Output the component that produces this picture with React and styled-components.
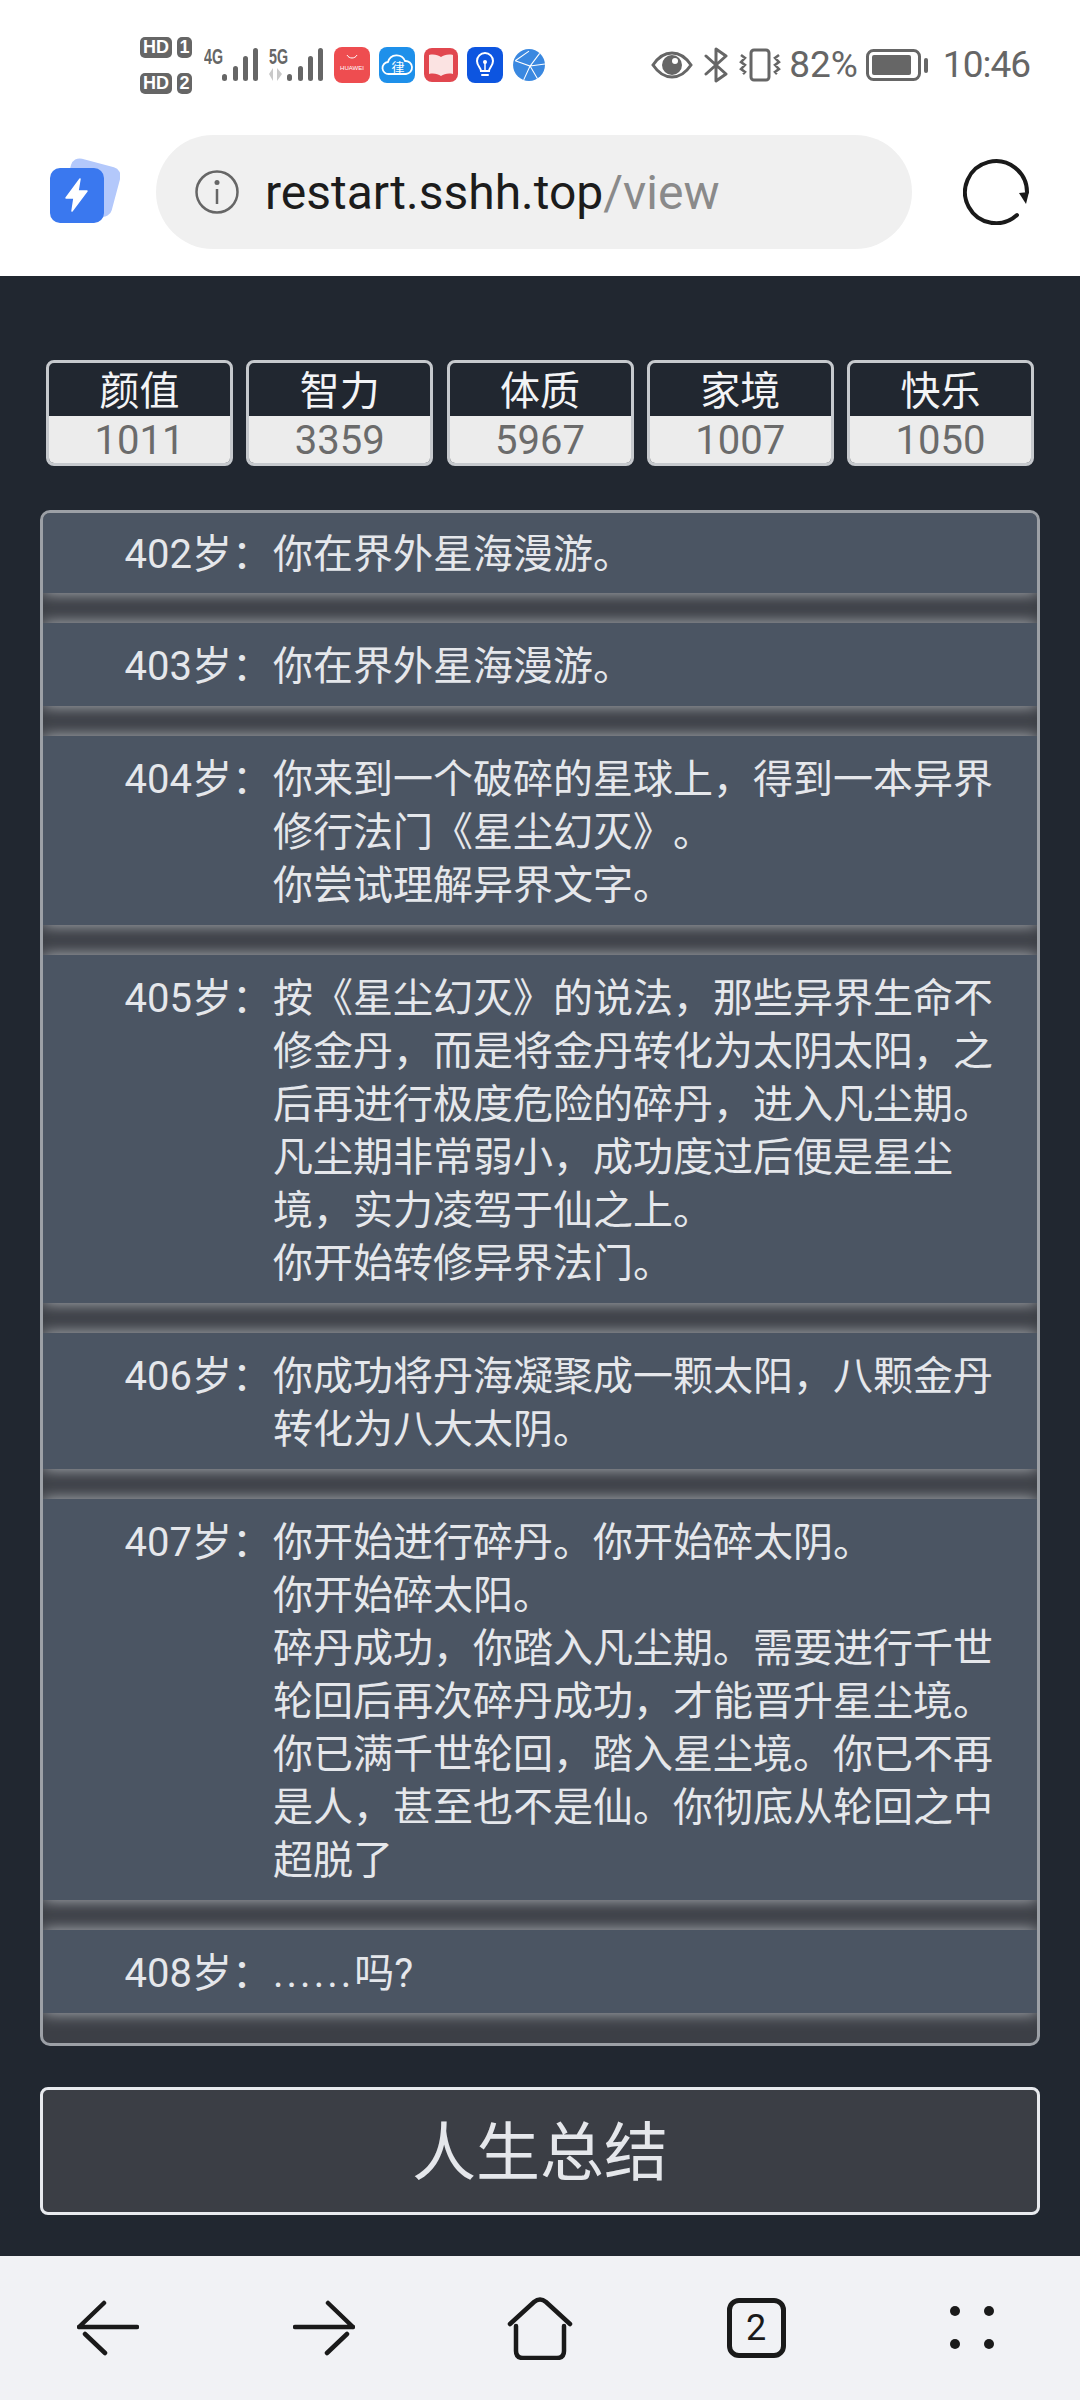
import React from 'react'
import styled, { createGlobalStyle } from 'styled-components'

const stats = [
  { label: '颜值', value: 1011 },
  { label: '智力', value: 3359 },
  { label: '体质', value: 5967 },
  { label: '家境', value: 1007 },
  { label: '快乐', value: 1050 },
]

const events = [
  { age: 402, lines: ['你在界外星海漫游。'] },
  { age: 403, lines: ['你在界外星海漫游。'] },
  { age: 404, lines: ['你来到一个破碎的星球上，得到一本异界修行法门《星尘幻灭》。', '你尝试理解异界文字。'] },
  {
    age: 405,
    lines: [
      '按《星尘幻灭》的说法，那些异界生命不修金丹，而是将金丹转化为太阴太阳，之后再进行极度危险的碎丹，进入凡尘期。凡尘期非常弱小，成功度过后便是星尘境，实力凌驾于仙之上。',
      '你开始转修异界法门。',
    ],
  },
  { age: 406, lines: ['你成功将丹海凝聚成一颗太阳，八颗金丹转化为八大太阴。'] },
  {
    age: 407,
    lines: [
      '你开始进行碎丹。你开始碎太阴。',
      '你开始碎太阳。',
      '碎丹成功，你踏入凡尘期。需要进行千世轮回后再次碎丹成功，才能晋升星尘境。',
      '你已满千世轮回，踏入星尘境。你已不再是人，甚至也不是仙。你彻底从轮回之中超脱了',
    ],
  },
  { age: 408, dots: true, lines: ['吗?'] },
]

const GlobalStyle = createGlobalStyle`
  html, body {
    margin: 0;
    padding: 0;
    background: #212730;
  }
  * {
    box-sizing: border-box;
  }
  body {
    font-family: Roboto, "Noto Sans CJK SC", sans-serif;
  }
`

const Screen = styled.div`
  width: 1080px;
  height: 2400px;
  display: flex;
  flex-direction: column;
  overflow: hidden;
`

const Header = styled.header`
  height: 276px;
  flex: none;
  background: #fff;
`

const StatusBar = styled.div`
  height: 130px;
  padding: 0 50px 0 140px;
  display: flex;
  align-items: center;
  color: #666;
`

const SimColumn = styled.div`
  display: flex;
  flex-direction: column;
  gap: 15px;
  margin-right: 12px;
`

const SimRow = styled.div`
  display: flex;
  gap: 5px;
`

const SimBadge = styled.span`
  height: 21px;
  padding: 0 ${(p) => (p.$wide ? 3 : 2)}px;
  min-width: ${(p) => (p.$wide ? 31 : 15)}px;
  border-radius: 5px;
  background: #666;
  color: #fff;
  font: 700 18px/21px "Liberation Sans", sans-serif;
  text-align: center;
`

const Spacer = styled.div`
  flex: 1;
`

const AppIcons = styled.div`
  display: flex;
  align-items: center;
  gap: 9px;
`

const SystemIcons = styled.div`
  display: flex;
  align-items: center;
  gap: 11px;
  margin-right: 8px;
`

const StatusText = styled.span`
  font-size: 37px;
  line-height: 44px;
  margin: ${(p) => p.$margin || 0};
  letter-spacing: ${(p) => p.$tracking || 0};
`

const Toolbar = styled.div`
  height: 146px;
  padding: 0 51px 22px 50px;
  display: flex;
  align-items: center;
`

const UrlBar = styled.div`
  width: 756px;
  height: 114px;
  margin-left: 36px;
  padding-left: 39px;
  border-radius: 57px;
  background: #f0f0f0;
  display: flex;
  align-items: center;
  gap: 26px;
`

const UrlText = styled.div`
  font-size: 48px;
  color: #1c1c1c;
  white-space: nowrap;

  span {
    color: #8a8a8a;
  }
`

const Reload = styled.div`
  margin-left: auto;
  display: flex;
`

const Main = styled.main`
  flex: 1;
  padding: 84px 40px 0;
  background: #212730;
`

const StatRow = styled.div`
  display: grid;
  grid-template-columns: repeat(5, 187px);
  justify-content: space-between;
  padding: 0 6px;
`

const Stat = styled.div`
  height: 106px;
  border: 3px solid #c6c9cd;
  border-radius: 8px;
  overflow: hidden;
  display: flex;
  flex-direction: column;
  text-align: center;
`

const StatLabel = styled.div`
  height: 53px;
  padding-top: 2px;
  color: #f3f4f6;
  font-size: 40px;
  line-height: 53px;
`

const StatValue = styled.div`
  flex: 1;
  background: #ececec;
  color: #6b6b6b;
  font-size: 40px;
  line-height: 49px;
`

const Timeline = styled.ul`
  list-style: none;
  margin: 44px 0 0;
  padding: 0;
  border: 3px solid #9ca0a6;
  border-radius: 10px;
  background: #3c3f46;
  overflow: hidden;
`

const Event = styled.li`
  display: grid;
  grid-template-columns: 229px 1fr;
  column-gap: 1px;
  margin-bottom: 30px;
  padding: 17px 26px 13px 0;
  background: #4b5563;
  box-shadow: 0 0 15px #b4b8bd;
  color: #e5e7eb;
  font-size: 40px;
  line-height: 53px;

  &:first-child {
    padding-top: 15px;
    padding-bottom: 12px;
  }
`

const Age = styled.span`
  text-align: right;
  white-space: nowrap;
`

const EventText = styled.div`
  text-spacing-trim: space-all;

  p {
    margin: 0;
  }
`

const Dots = styled.span`
  letter-spacing: 3px;
`

const SummaryButton = styled.button`
  display: block;
  width: 100%;
  height: 128px;
  margin-top: 41px;
  padding: 6px 0 0;
  border: 3px solid #e8eaee;
  border-radius: 8px;
  background: #3b3e45;
  color: #e5e7eb;
  font-family: inherit;
  font-size: 64px;
  line-height: 1;
`

const BottomNav = styled.nav`
  height: 144px;
  flex: none;
  background: #f1f2f5;
  display: grid;
  grid-template-columns: repeat(5, 1fr);
  align-items: center;
`

const NavItem = styled.div`
  display: flex;
  justify-content: center;
`

const TabCount = styled.div`
  width: 59px;
  height: 60px;
  border: 5px solid #1a1a1a;
  border-radius: 12px;
  color: #1a1a1a;
  font-size: 36px;
  line-height: 50px;
  text-align: center;
`

function SignalBars({ tag, updown }) {
  return (
    <svg width="65" height="40" viewBox="0 0 65 40" fill="#666">
      <text x="0" y="19" fontFamily="Liberation Sans" fontWeight="700" fontSize="22" textLength="19" lengthAdjust="spacingAndGlyphs">{tag}</text>
      {updown && <path d="M4 36V23l-4 6zM8 23v13l5-7z" fill="#c9c9c9" />}
      <rect x="18" y="29" width="5" height="7" rx="2.500" />
      <rect x="29" y="21" width="5" height="15" rx="2.500" />
      <rect x="39" y="11" width="5" height="25" rx="2.500" />
      <rect x="49" y="3" width="5" height="33" rx="2.500" />
    </svg>
  )
}

function HuaweiIcon() {
  return (
    <svg width="36" height="36" viewBox="0 0 36 36">
      <rect width="36" height="36" rx="8" fill="#ee4d50" />
      <path d="M13 8c2 4 8 4 10 0" stroke="#fff" strokeWidth="1" fill="none" />
      <text x="18" y="23" textAnchor="middle" fill="#fff" fontSize="6" fontFamily="Liberation Sans">HUAWEI</text>
    </svg>
  )
}

function CloudIcon() {
  return (
    <svg width="36" height="36" viewBox="0 0 36 36">
      <rect width="36" height="36" rx="8" fill="#1e90ea" />
      <path d="M10 27a6 6 0 0 1-1-12 9 9 0 0 1 17-1 6.500 6.500 0 0 1 1 13z" fill="none" stroke="#fff" strokeWidth="1.800" />
      <text x="19" y="25" textAnchor="middle" fill="#fff" fontSize="13">律</text>
    </svg>
  )
}

function BookIcon() {
  return (
    <svg width="34" height="36" viewBox="0 0 34 36">
      <rect width="34" height="34" y="1" rx="8" fill="#e1474f" />
      <path d="M5 8c5-1 9 0 12 2 3-2 7-3 12-2v19c-5-1-9 0-12 2-3-2-7-3-12-2z" fill="#fbe3e2" />
    </svg>
  )
}

function BulbIcon() {
  return (
    <svg width="36" height="36" viewBox="0 0 36 36">
      <rect width="36" height="36" rx="8" fill="#0d55e0" />
      <path d="M14 24c0-3-4-5-4-10a8 8 0 0 1 16 0c0 5-4 7-4 10zM15 28h6" fill="none" stroke="#fff" strokeWidth="2" strokeLinecap="round" />
      <circle cx="18" cy="15" r="2" fill="#fff" />
      <path d="M18 16v8" stroke="#fff" strokeWidth="1.500" />
    </svg>
  )
}

function GlobeIcon() {
  return (
    <svg width="34" height="34" viewBox="0 0 32 32">
      <circle cx="16" cy="16" r="15" fill="#3a88e0" />
      <path d="M3 12l13-9M3 12l14 5 9-12M17 17l-6 13M17 17l14-2M17 17l7 12" stroke="#fff" strokeWidth="1" fill="none" />
    </svg>
  )
}

function EyeIcon() {
  return (
    <svg width="42" height="28" viewBox="0 0 42 28">
      <path d="M2 14C8 5 14 2 21 2s13 3 19 12c-6 9-12 12-19 12S8 23 2 14z" fill="none" stroke="#666" strokeWidth="3" />
      <circle cx="21" cy="14" r="10" fill="#666" />
      <circle cx="24" cy="10" r="3" fill="#fff" />
    </svg>
  )
}

function BluetoothIcon() {
  return (
    <svg width="24" height="36" viewBox="0 0 24 36" fill="none" stroke="#666" strokeWidth="3" strokeLinejoin="round" strokeLinecap="round">
      <path d="M2 9l20 18-10 7V2l10 7L2 27" />
    </svg>
  )
}

function VibrateIcon() {
  return (
    <svg width="42" height="34" viewBox="0 0 42 34" fill="none" stroke="#666">
      <rect x="12" y="2" width="18" height="30" rx="3" strokeWidth="3" />
      <path d="M2 7l4 3-4 4 4 3-4 4 4 3-2 2M40 7l-4 3 4 4-4 3 4 4-4 3 2 2" strokeWidth="2.500" />
    </svg>
  )
}

function BatteryIcon() {
  return (
    <svg width="62" height="32" viewBox="0 0 62 32">
      <rect x="1.500" y="1.500" width="52" height="29" rx="6" fill="none" stroke="#666" strokeWidth="3" />
      <rect x="6" y="6" width="39" height="20" rx="2" fill="#666" />
      <rect x="58" y="9" width="4" height="15" rx="2" fill="#666" />
    </svg>
  )
}

function AppLogo() {
  return (
    <svg width="70" height="70" viewBox="0 0 70 70">
      <rect x="16" y="5" width="51" height="51" rx="9" fill="#b3c8fb" transform="rotate(15 41 30)" />
      <rect x="0" y="11" width="54" height="55" rx="10" fill="#3a78ef" />
      <path d="M30 22L16 41h8l-2 13 15-20h-9z" fill="#fff" stroke="#fff" strokeWidth="1.500" strokeLinejoin="round" />
    </svg>
  )
}

function InfoIcon() {
  return (
    <svg width="44" height="44" viewBox="0 0 44 44">
      <circle cx="22" cy="22" r="20.500" fill="none" stroke="#666" strokeWidth="2.500" />
      <circle cx="22" cy="12.500" r="2.500" fill="#666" />
      <path d="M22 19v15" stroke="#666" strokeWidth="2.500" />
    </svg>
  )
}

function ReloadIcon() {
  return (
    <svg width="66" height="66" viewBox="0 0 66 66">
      <path d="M54 56A31 31 0 1 1 64 33" fill="none" stroke="#1a1a1a" strokeWidth="4" strokeLinecap="round" />
      <path d="M56 34l10-1-3 12z" fill="#1a1a1a" />
    </svg>
  )
}

function BackIcon({ flip }) {
  return (
    <svg width="62" height="58" viewBox="0 0 62 58" style={flip ? { transform: 'scaleX(-1)' } : undefined}>
      <path d="M2 28h58M2 28L27 4M8 35l20 19" fill="none" stroke="#1a1a1a" strokeWidth="4.500" strokeLinecap="round" />
    </svg>
  )
}

function HomeIcon() {
  return (
    <svg width="66" height="64" viewBox="0 0 66 64">
      <path d="M3 28L27 6q6-5 12 0l24 22M9 30v25q0 7 7 7h34q7 0 7-7V30" fill="none" stroke="#1a1a1a" strokeWidth="4.500" strokeLinecap="round" />
    </svg>
  )
}

function MoreIcon() {
  return (
    <svg width="44" height="44" viewBox="0 0 44 44" fill="#1a1a1a">
      <circle cx="5" cy="5" r="5" />
      <circle cx="39" cy="5" r="5" />
      <circle cx="5" cy="38" r="5" />
      <circle cx="39" cy="38" r="5" />
    </svg>
  )
}

export default function App() {
  return (
    <Screen>
      <GlobalStyle />
      <Header>
        <StatusBar>
          <SimColumn>
            <SimRow><SimBadge $wide>HD</SimBadge><SimBadge>1</SimBadge></SimRow>
            <SimRow><SimBadge $wide>HD</SimBadge><SimBadge>2</SimBadge></SimRow>
          </SimColumn>
          <SignalBars tag="4G" />
          <SignalBars tag="5G" updown />
          <AppIcons>
            <HuaweiIcon />
            <CloudIcon />
            <BookIcon />
            <BulbIcon />
            <GlobeIcon />
          </AppIcons>
          <Spacer />
          <SystemIcons>
            <EyeIcon />
            <BluetoothIcon />
            <VibrateIcon />
          </SystemIcons>
          <StatusText $margin="0 8px 0 0">82%</StatusText>
          <BatteryIcon />
          <StatusText $margin="0 0 0 15px" $tracking="-1px">10:46</StatusText>
        </StatusBar>
        <Toolbar>
          <AppLogo />
          <UrlBar>
            <InfoIcon />
            <UrlText>restart.sshh.top<span>/view</span></UrlText>
          </UrlBar>
          <Reload><ReloadIcon /></Reload>
        </Toolbar>
      </Header>
      <Main>
        <StatRow>
          {stats.map((s) => (
            <Stat key={s.label}>
              <StatLabel>{s.label}</StatLabel>
              <StatValue>{s.value}</StatValue>
            </Stat>
          ))}
        </StatRow>
        <Timeline>
          {events.map((e) => (
            <Event key={e.age}>
              <Age>{e.age}岁：</Age>
              <EventText>
                {e.lines.map((line, i) => (
                  <p key={i}>{e.dots && <Dots>......</Dots>}{line}</p>
                ))}
              </EventText>
            </Event>
          ))}
        </Timeline>
        <SummaryButton>人生总结</SummaryButton>
      </Main>
      <BottomNav>
        <NavItem><BackIcon /></NavItem>
        <NavItem><BackIcon flip /></NavItem>
        <NavItem><HomeIcon /></NavItem>
        <NavItem><TabCount>2</TabCount></NavItem>
        <NavItem><MoreIcon /></NavItem>
      </BottomNav>
    </Screen>
  )
}
